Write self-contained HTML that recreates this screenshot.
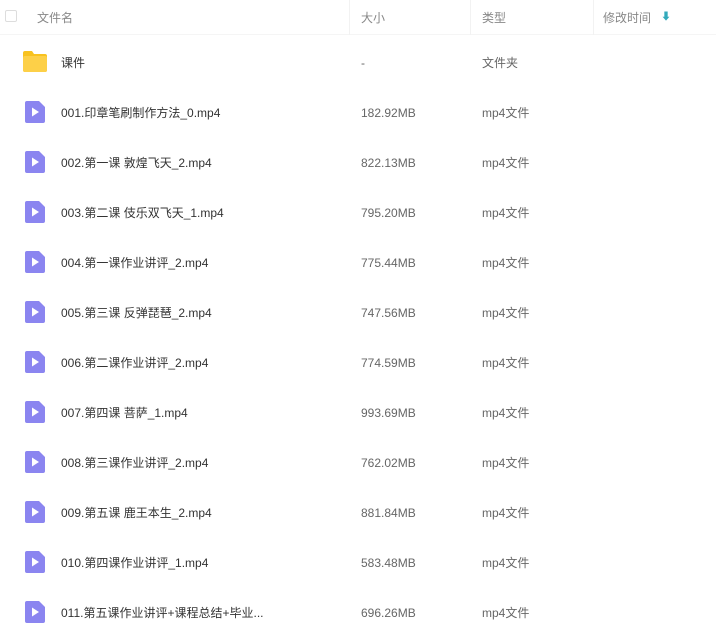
<!DOCTYPE html>
<html><head><meta charset="utf-8"><style>
*{margin:0;padding:0;box-sizing:border-box}
body{width:716px;height:638px;background:#fff;font-family:"Liberation Sans","Noto Sans CJK SC",sans-serif;font-size:12px;color:#424e67;overflow:hidden;position:relative}
.hd{position:absolute;top:0;left:0;width:716px;height:35px;border-bottom:1px solid #f5f5f5;color:#888}
.hd span{position:absolute;top:10px;line-height:16px;height:16px}
.sep{position:absolute;top:0;width:1px;height:35px;background:#f2f2f2}
.cb{position:absolute;left:5px;top:10px;width:12px;height:12px;border:1px solid #ddd;border-radius:2px}
.row{position:absolute;left:0;width:716px;height:50px}
.row span{position:absolute;top:18px;line-height:16px;height:16px;color:#333;white-space:nowrap}
.row .g{color:#666}
.ic{position:absolute;left:25px;top:14px}
</style></head><body>
<div class="hd"><div class="cb"></div>
<span style="left:37px">文件名</span>
<div class="sep" style="left:349px"></div><span style="left:361px">大小</span>
<div class="sep" style="left:470px"></div><span style="left:482px">类型</span>
<div class="sep" style="left:593px"></div><span style="left:603px">修改时间</span>
<span style="left:661px;color:#3ab;font-size:10px">⬇</span>
</div>
<div class="row" style="top:37px">
<svg class="ic" style="left:23px;top:14px" width="24" height="21" viewBox="0 0 24 21"><path d="M0 2a2 2 0 0 1 2-2h7l2 3h11a2 2 0 0 1 2 2v14a2 2 0 0 1-2 2H2a2 2 0 0 1-2-2z" fill="#f8c21f"/><rect x="0" y="5" width="24" height="16" rx="2" fill="#fdd048"/></svg>
<span style="left:61px">课件</span><span class="g" style="left:361px">-</span><span class="g" style="left:482px">文件夹</span></div>
</body>
<script>
var d=[["001.印章笔刷制作方法_0.mp4","182.92MB"],["002.第一课 敦煌飞天_2.mp4","822.13MB"],["003.第二课 伎乐双飞天_1.mp4","795.20MB"],["004.第一课作业讲评_2.mp4","775.44MB"],["005.第三课 反弹琵琶_2.mp4","747.56MB"],["006.第二课作业讲评_2.mp4","774.59MB"],["007.第四课 菩萨_1.mp4","993.69MB"],["008.第三课作业讲评_2.mp4","762.02MB"],["009.第五课 鹿王本生_2.mp4","881.84MB"],["010.第四课作业讲评_1.mp4","583.48MB"],["011.第五课作业讲评+课程总结+毕业...","696.26MB"]];
var h="";d.forEach(function(r,i){h+='<div class="row" style="top:'+(87+i*50)+'px"><svg class="ic" width="20" height="22" viewBox="0 0 20 22"><path d="M2 0h12l6 6v14a2 2 0 0 1-2 2H2a2 2 0 0 1-2-2V2a2 2 0 0 1 2-2z" fill="#8b85f0"/><path d="M7 6.5v9l7-4.5z" fill="#fff"/></svg><span style="left:61px">'+r[0]+'</span><span class="g" style="left:361px">'+r[1]+'</span><span class="g" style="left:482px">mp4文件</span></div>'});
document.body.insertAdjacentHTML("beforeend",h);
</script></html>
